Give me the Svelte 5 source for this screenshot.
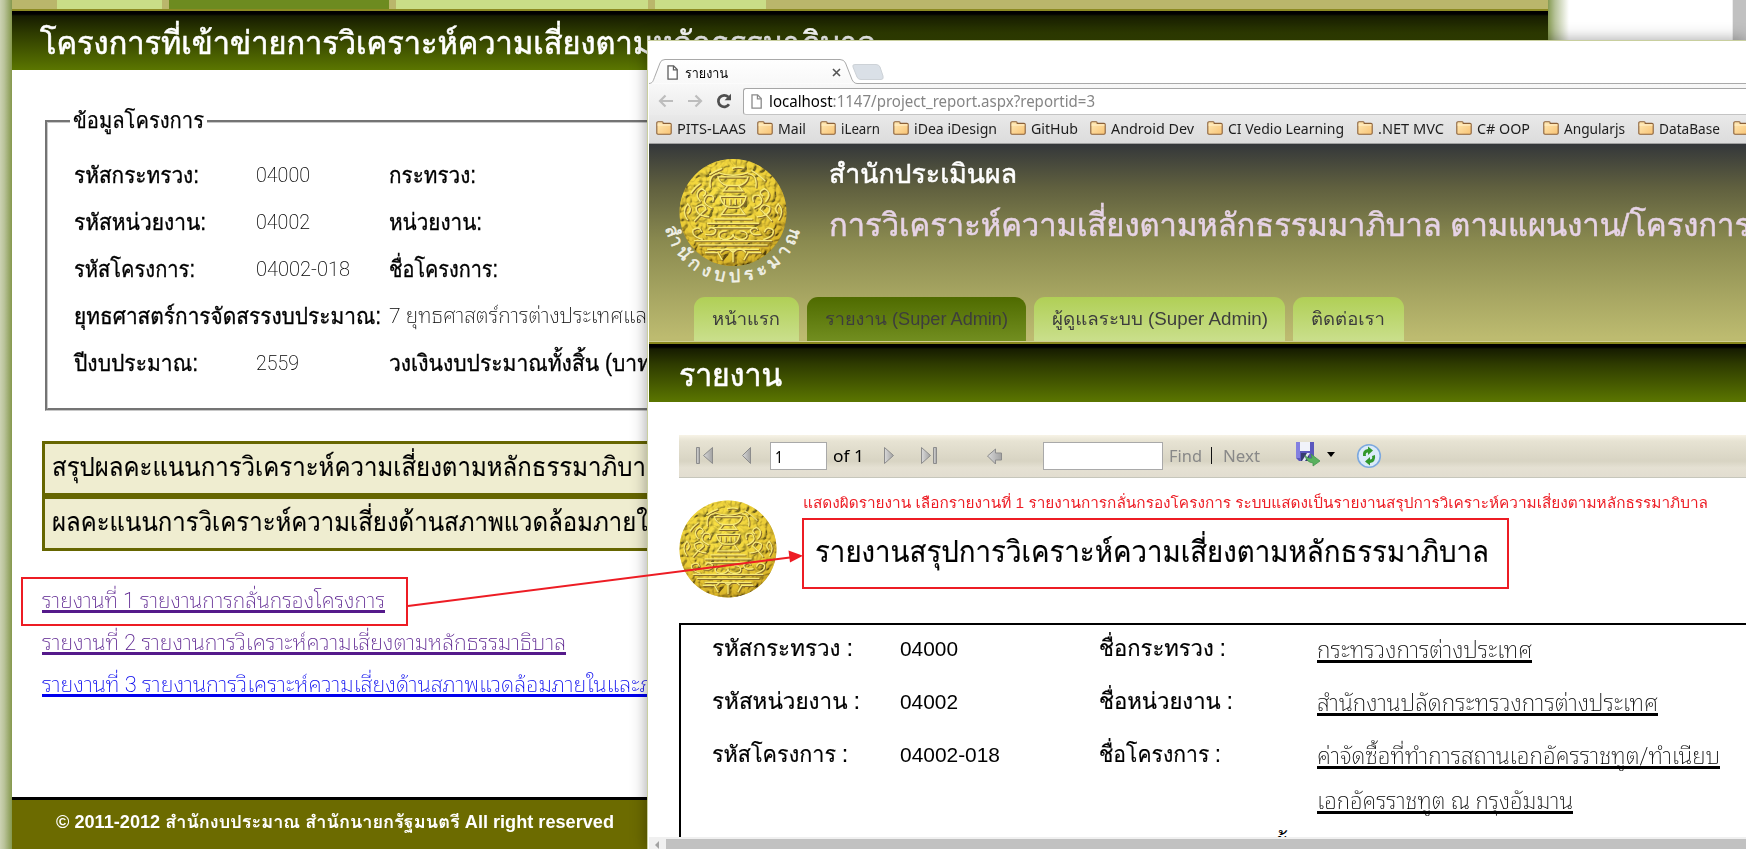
<script>
  function fit(node, width) {
    const natural = node.getBoundingClientRect().width;
    if (width && natural) node.style.transform = `scaleX(${width / natural})`;
  }

  const projectRows = [
    [['รหัสกระทรวง:', 125], ['04000', 54], ['กระทรวง:', 87]],
    [['รหัสหน่วยงาน:', 132], ['04002', 54], ['หน่วยงาน:', 93]],
    [['รหัสโครงการ:', 121], ['04002-018', 94], ['ชื่อโครงการ:', 109]],
    [['ยุทธศาสตร์การจัดสรรงบประมาณ:', 307], ['', 0], ['7 ยุทธศาสตร์การต่างประเทศแล', 258, true]],
    [['ปีงบประมาณ:', 124], ['2559', 43], ['วงเงินงบประมาณทั้งสิ้น (บาท', 262]]
  ];

  const links = [
    { text: 'รายงานที่ 1 รายงานการกลั่นกรองโครงการ', w: 343 },
    { text: 'รายงานที่ 2 รายงานการวิเคราะห์ความเสี่ยงตามหลักธรรมาธิบาล', w: 524 },
    { text: 'รายงานที่ 3 รายงานการวิเคราะห์ความเสี่ยงด้านสภาพแวดล้อมภายในและภ', w: 611, fresh: true }
  ];

  const bookmarks = [
    ['PITS-LAAS', 69, 101], ['Mail', 28, 63], ['iLearn', 39, 73], ['iDea iDesign', 83, 117],
    ['GitHub', 47, 80], ['Android Dev', 83, 117], ['CI Vedio Learning', 116, 150],
    ['.NET MVC', 66, 99], ['C# OOP', 53, 87], ['Angularjs', 61, 95], ['DataBase', 61, 95], ['', 0, 30]
  ];

  const tabs = [
    { text: 'หน้าแรก', w: 68, box: 105 },
    { text: 'รายงาน (Super Admin)', w: 183, box: 219, on: true },
    { text: 'ผู้ดูแลระบบ (Super Admin)', w: 216, box: 251 },
    { text: 'ติดต่อเรา', w: 74, box: 111 }
  ];

  const reportRows = [
    [['รหัสกระทรวง :', 141], ['04000', 58], ['ชื่อกระทรวง :', 127], [['กระทรวงการต่างประเทศ', 215]]],
    [['รหัสหน่วยงาน :', 148], ['04002', 58], ['ชื่อหน่วยงาน :', 134], [['สำนักงานปลัดกระทรวงการต่างประเทศ', 341]]],
    [['รหัสโครงการ :', 136], ['04002-018', 100], ['ชื่อโครงการ :', 122],
      [['ค่าจัดซื้อที่ทำการสถานเอกอัครราชทูต/ทำเนียบ', 403], ['เอกอัครราชทูต ณ กรุงอัมมาน', 256]]]
  ];
</script>

{#snippet t(text, w)}<span class="t" use:fit={w}>{text}</span>{/snippet}

{#snippet page(size)}
  <svg class="file" width={size} height="15" viewBox="0 0 11 15">
    <path d="M1 .8h5.6l3.6 3.8v9.6H1z" fill="#fff" stroke="currentColor" stroke-width="1.3" />
    <path d="M6.4 1v3.9h3.7" fill="none" stroke="currentColor" stroke-width="1.2" />
  </svg>
{/snippet}

{#snippet medal(id)}
  <defs>
    <radialGradient id="g{id}" cx=".42" cy=".32" r=".72">
      <stop offset="0" stop-color="#f2e252" /><stop offset=".6" stop-color="#dfc33a" />
      <stop offset=".9" stop-color="#b58b1b" /><stop offset="1" stop-color="#7c610f" />
    </radialGradient>
    <clipPath id="c{id}"><ellipse cx="50" cy="50" rx="49.5" ry="49.5" /></clipPath>
    <filter id="f{id}" x="0" y="0" width="1" height="1">
      <feTurbulence type="turbulence" baseFrequency=".11" numOctaves="2" seed="8" />
      <feDiffuseLighting surfaceScale="5" diffuseConstant="1.15" lighting-color="#f8d838">
        <feDistantLight azimuth="225" elevation="50" />
      </feDiffuseLighting>
    </filter>
  </defs>
  <g clip-path="url(#c{id})">
    <circle cx="50" cy="50" r="50" fill="url(#g{id})" />
    <rect width="100" height="100" filter="url(#f{id})" opacity=".5" />
    {#each [['#86692c', 1], ['#f7eb79', 0]] as [color, d]}
      <g fill="none" stroke={color} stroke-width="1.3" transform="translate({d} {d})">
        <path d="M36 17h28q-2 7-9 8h-10q-7-1-9-8zM36 13q14 5 28 0M45 25l-4 5h18l-4-5M38 35h24q-2 9-8 10h-8q-6-1-8-10zM44 45l-5 7h22l-5-7M42 37v5m5-5v6m5-6v6m5-6v5" />
        <path d="M32 56h36M26 60h48M28 64h44M18 80h64M14 76h72M26 84h48M38 87q6-7 12 0 6-7 12 0M24 87h12l4 7M76 87h-12l-4 7M50 84v12" />
        <path d="M44 67q-7 0-7 4t7 4q6-1 6-5 0 4 6 5 7 0 7-4t-7-4M22 75q-11-3-9-9 6-4 8 2M78 75q11-3 9-9-6-4-8 2M24 70q10 2 10-4-5-4-7 0M76 70q-10 2-10-4 5-4 7 0" />
        <path d="M28 54q-13-1-12-9 7-5 9 2-6 5-11 11M72 54q13-1 12-9-7-5-9 2 6 5 11 11M31 46q-12-5-5-12 8-1 5 6M69 46q12-5 5-12-8-1-5 6M20 40q-7-8 1-12 7 3 1 7M80 40q7-8-1-12-7 3-1 7M29 27q-2-12 7-13M71 27q2-12-7-13M8 57q-6-8 0-15 5 5 0 9M92 57q6-8 0-15-5 5 0 9M11 32q4-6 9-9m8-8q6-4 12-6m9 0q6-2 11 0m7 2q7 4 13 10" />
      </g>
    {/each}
  </g>
{/snippet}

<div class="screen">
  <div class="back">
    <div class="edge left"></div>
    <main>
      <div class="oldtabs"><i></i><i class="on"></i><i class="wide"></i><i class="last"></i></div>
      <h1>{@render t('โครงการที่เข้าข่ายการวิเคราะห์ความเสี่ยงตามหลักธรรมาภิบาล', 836)}</h1>
      <fieldset>
        <legend>{@render t('ข้อมูลโครงการ', 131)}</legend>
        {#each projectRows as [label, value, other]}
          <div class="prow">
            <b>{@render t(label[0], label[1])}</b>
            <span class="thin">{@render t(value[0], value[1])}</span>
            <span class={other[2] ? 'thin' : 'mid'}>{@render t(other[0], other[1])}</span>
          </div>
        {/each}
      </fieldset>
      <div class="panels">
        <div>{@render t('สรุปผลคะแนนการวิเคราะห์ความเสี่ยงตามหลักธรรมาภิบา', 594)}</div>
        <div>{@render t('ผลคะแนนการวิเคราะห์ความเสี่ยงด้านสภาพแวดล้อมภายใ', 596)}</div>
      </div>
      <div class="links">
        {#each links as l}<div class:fresh={l.fresh}>{@render t(l.text, l.w)}</div>{/each}
      </div>
      <footer>{@render t('© 2011-2012 สำนักงบประมาณ สำนักนายกรัฐมนตรี All right reserved', 558)}</footer>
    </main>
    <div class="edge right"></div>
    <div class="vbar"></div>
  </div>

  <section class="window">
    <div class="strip">
      <svg class="outline" width="1097" height="43" viewBox="0 0 1097 43">
        <defs><linearGradient id="tabfill" x2="0" y2="1"><stop stop-color="#fff" /><stop offset="1" stop-color="#f8f8f8" /></linearGradient></defs>
        <path d="M0 42.5 C4 42 4 40 6 35 L11 22 Q12 18.500 16 18.500 H191 Q195 18.500 196.500 22 L202 36 Q204 42.500 208 42.500 H1097" fill="url(#tabfill)" stroke="#a9a9a9" />
        <path d="M206 23.500 H227 Q230 23.500 231 26 L234 35 Q235 38.500 232 38.500 H212 Q209 38.500 208 36 L204 26 Q203 23.500 206 23.500Z" fill="#dae0e7" stroke="#cdd2d7" />
      </svg>
      <div class="tabtext">
        {@render page(11)}
        <span class="name">{@render t('รายงาน', 43)}</span>
        <svg width="9" height="9" viewBox="0 0 9 9"><path d="M1 1l7 7M8 1L1 8" stroke="#555" stroke-width="1.6" /></svg>
      </div>
    </div>
    <div class="nav">
      <svg width="16" height="14" viewBox="0 0 16 14"><path d="M15 7H2M7.500 1.500L2 7l5.500 5.500" fill="none" stroke="#bdbdbd" stroke-width="2.200" /></svg>
      <svg width="16" height="14" viewBox="0 0 16 14"><path d="M1 7h13M8.500 1.500L14 7l-5.500 5.500" fill="none" stroke="#bdbdbd" stroke-width="2.200" /></svg>
      <svg width="16" height="16" viewBox="0 0 16 16"><path d="M13 11.300A5.800 5.800 0 1 1 12.300 4" fill="none" stroke="#4f4f4f" stroke-width="2.700" /><path d="M15 .8v6.400H8.600z" fill="#4f4f4f" /></svg>
      <div class="url">
        {@render page(11)}
        <span class="addr" use:fit={326}><em>localhost</em>:1147/project_report.aspx?reportid=3</span>
      </div>
    </div>
    <div class="marks">
      {#each bookmarks as [name, w, step]}
        <div style="width:{step}px">
          <svg width="16" height="14" viewBox="0 0 16 14">
            <defs><linearGradient id="fold" x2="1" y2="1"><stop stop-color="#ffe9b5" /><stop offset="1" stop-color="#f8c374" /></linearGradient></defs>
            <path d="M.8 12V2Q.8.800 2 .8h4.200q1 0 1 1.600H14q1.200 0 1.200 1.200V12q0 1.200-1.200 1.200H2Q.8 13.200.8 12z" fill="url(#fold)" stroke="#8b6038" stroke-width="1.100" />
            <path d="M1.500 4h13" stroke="#fff1cd" />
          </svg>
          {@render t(name, w)}
        </div>
      {/each}
    </div>

    <header>
      <svg class="logo" width="150" height="145" viewBox="655 150 150 145">
        <svg x="679" y="158.500" width="108" height="108" viewBox="0 0 100 100">{@render medal('a')}</svg>
        <path id="arc" d="M665.600 228 A69 69 0 0 0 800.400 228" fill="none" />
        <text font-size="18" fill="#f1f1e8" stroke="#f1f1e8" stroke-width=".5"><textPath href="#arc" textLength="184">สำนักงบประมาณ</textPath></text>
      </svg>
      <div class="titles">
        <h2>{@render t('สำนักประเมินผล', 188)}</h2>
        <h3>{@render t('การวิเคราะห์ความเสี่ยงตามหลักธรรมมาภิบาล ตามแผนงาน/โครงการ', 922)}</h3>
      </div>
      <nav>
        {#each tabs as tab}
          <div class:on={tab.on} style="width:{tab.box}px">{@render t(tab.text, tab.w)}</div>
        {/each}
      </nav>
    </header>
    <div class="band">{@render t('รายงาน', 103)}</div>

    <div class="tools">
      <svg width="370" height="42" viewBox="679 435 370 42">
        <defs><linearGradient id="gr" x2="1"><stop stop-color="#d9d9d9" /><stop offset="1" stop-color="#a2a2a2" /></linearGradient></defs>
        <g fill="url(#gr)" stroke="#8c8c8c">
          <path d="M696.500 447.500h3v16h-3z" />
          <path d="M712.500 447.500v16L703.500 455.500z" />
          <path d="M750.500 447.500v16L742.500 455.500z" />
          <path d="M884.500 447.500v16L893.500 455.500z" />
          <path d="M921.500 447.500v16L930.500 455.500z" />
          <path d="M933.500 447.500h3v16h-3z" />
          <path d="M987.500 456l8-7v4h6v7h-6v4z" />
        </g>
      </svg>
      <span class="box one">{@render t('1', 8)}</span>
      <span class="of">{@render t('of 1', 31)}</span>
      <span class="box find"></span>
      <span class="gray">{@render t('Find', 33)}</span>
      <i class="bar"></i>
      <span class="gray next">{@render t('Next', 37)}</span>
      <svg class="disk" width="90" height="30" viewBox="1294 440 90 30">
        <path d="M1296 442h18v19h-15l-3-3z" fill="#5b57bd" /><path d="M1296 442h4v16h-4z" fill="#8380e0" />
        <path d="M1300 442h10v9h-10z" fill="#f1f3fa" /><path d="M1301 453h8v8h-8z" fill="#373b70" /><path d="M1302 461l5-8h3l-5 8z" fill="#e3e6f2" />
        <path d="M1305 455q2 4 7 3l-1-4 9 7-7 5v-3q-7-1-8-8z" fill="#59b15e" stroke="#3c8f49" stroke-width=".7" />
        <path d="M1327 452h8l-4 5z" fill="#000" />
        <circle cx="1369" cy="456" r="11.300" fill="#dcebfa" stroke="#7da9df" stroke-width="1.600" />
        <g fill="#31982c"><path d="M1363 456q-1-6 5-7v-2.500l5 4-5 4.500v-2.500q-3 0-2 3.500z" /><path d="M1375 455q1 7-5 8v2.500l-5-4 5-4.500v2.500q3 0 2-3.500z" /></g>
      </svg>
    </div>

    <div class="rephead">
      <svg width="98" height="98" viewBox="0 0 100 100">{@render medal('b')}</svg>
      <div class="heads">
        <p class="note">{@render t('แสดงผิดรายงาน เลือกรายงานที่ 1 รายงานการกลั่นกรองโครงการ ระบบแสดงเป็นรายงานสรุปการวิเคราะห์ความเสี่ยงตามหลักธรรมาภิบาล', 905)}</p>
        <p class="title">{@render t('รายงานสรุปการวิเคราะห์ความเสี่ยงตามหลักธรรมาภิบาล', 674)}</p>
      </div>
    </div>

    <div class="report">
      {#each reportRows as [code, value, label, lines]}
        <div class="rrow">
          <span class="lab">{@render t(code[0], code[1])}</span>
          <span class="num">{@render t(value[0], value[1])}</span>
          <span class="lab">{@render t(label[0], label[1])}</span>
          <div class="under">{#each lines as l}<div>{@render t(l[0], l[1])}</div>{/each}</div>
        </div>
      {/each}
      <div class="cut"><span>ทั้</span></div>
    </div>
    <div class="hbar">
      <svg width="17" height="12" viewBox="0 0 17 12"><path d="M10 4v8L6 8z" fill="#a3a3a3" /></svg>
      <i></i>
    </div>
  </section>

  <svg class="marksup" width="1746" height="849" viewBox="0 0 1746 849">
    <g fill="none" stroke="#ed1c24" stroke-width="2">
      <rect x="22" y="578" width="385" height="47" />
      <rect x="803" y="519" width="705" height="69" />
      <path d="M408 606L790 557.500" />
    </g>
    <path d="M803 555.700L788.500 550.500l1.500 12z" fill="#ed1c24" />
  </svg>
</div>

<style>
  :global(body) { margin: 0; background: #fff; overflow: hidden; }
  .screen { position: relative; width: 1746px; height: 849px; overflow: hidden; font-family: "Liberation Sans", Loma, "Noto Sans Thai Looped", "Noto Sans Thai", sans-serif; color: #000; }
  .screen * { box-sizing: border-box; }
  .t, .addr { display: inline-block; white-space: pre; transform-origin: 0 50%; }
  svg { display: block; flex: none; }
  h1, h2, h3, p { margin: 0; font-weight: normal; }

  .back { display: grid; grid-template-columns: 12px 1536px 1fr 14px; height: 849px; }
  .edge.left { background: linear-gradient(90deg, #ccd2b3, #bac39a 35%, #85984d); }
  .edge.right { background: linear-gradient(90deg, #869b52, #b6c298 7px, #fff 21px); }
  .vbar { background: #c1c1c1; border-left: 1px solid #ececec; }
  main { display: flex; flex-direction: column; min-width: 0; }
  .oldtabs { height: 11px; padding-left: 45px; display: flex; gap: 7px; background: #bab66b; border-bottom: 2px solid #8d8b23; }
  .oldtabs i { width: 105px; background: #c9dd87; }
  .oldtabs i.on { width: 220px; background: #6d8b20; }
  .oldtabs i.wide { width: 252px; }
  .oldtabs i.last { width: 111px; }
  h1 { height: 59px; padding: 6px 0 0 28px; line-height: 53px; font-size: 32px; font-weight: 400; -webkit-text-stroke: .6px #fff; color: #fff; background: linear-gradient(#000 3px, #161c00 5px, #2e3b00 22px, #5b7600); }
  fieldset { margin: 31px 40px 0 33px; padding: 11px 0 21px 26px; border: 3px groove #c8c8c8; min-width: 0; height: 310px; }
  legend { height: 40px; line-height: 40px; font-size: 22px; padding: 0 0 0 3px; margin-left: -4px; width: 137px; font-weight: 400; -webkit-text-stroke: .25px #000; }
  .prow { display: grid; grid-template-columns: 182px 133px 1fr; height: 47px; line-height: 46px; font-size: 23px; }
  .prow b, .mid { font-weight: 400; -webkit-text-stroke: .35px #000; }
  .thin { font-family: Roboto, "Noto Sans Thai Looped", Loma, "Noto Sans Thai", sans-serif; font-weight: 200; font-size: 21px; }
  .panels { margin: 30px 40px 0 30px; }
  .panels div { height: 55px; border: 3px solid #666600; background: #efedd0; padding-left: 7px; line-height: 47px; font-size: 27px; -webkit-text-stroke: .15px #000; }
  .links { margin: 29px 0 0 30px; font-family: Roboto, "Noto Sans Thai Looped", Loma, "Noto Sans Thai", sans-serif; font-size: 22px; font-weight: 200; color: #551a8b; }
  .links div { height: 42px; line-height: 42px; }
  .links .fresh { color: #0000ee; }
  .links .t, .under .t { text-decoration: underline; text-decoration-thickness: 3px; text-underline-offset: 2px; text-decoration-skip-ink: none; }
  footer { margin-top: auto; height: 52px; border-top: 3px solid #000; background: #6c6b00; color: #fff; font-weight: bold; font-size: 18px; line-height: 45px; padding-left: 44px; }

  .window { position: absolute; left: 647px; top: 40px; width: 1099px; height: 809px; padding-left: 1px; background: #fff; border: solid #c9cf9f; border-width: 1px 0 0 1px; box-shadow: 0 0 15px rgba(0, 0, 0, .38); display: flex; flex-direction: column; clip-path: inset(-30px 0 0 -30px); }
  .strip { display: grid; height: 43px; flex: none; }
  .strip > * { grid-area: 1 / 1; }
  .tabtext { display: flex; align-items: flex-start; padding: 24px 0 0 18px; color: #5d5d5d; }
  .name { width: 147px; margin-left: 7px; color: #000; font-size: 14px; line-height: 16px; }
  .tabtext svg:last-child { margin-top: 3px; }
  .nav { height: 31px; flex: none; display: flex; align-items: center; gap: 13px; padding: 3px 0 0 9px; background: linear-gradient(#f8f8f8, #ebebeb); }
  .nav > svg { margin-top: -1px; }
  .url { flex: 1; height: 27px; margin-left: -2px; display: flex; align-items: center; gap: 7px; background: #fff; border: 1px solid #a6a6a6; border-bottom-color: #c4c4c4; border-right: 0; border-radius: 3px 0 0 3px; padding-left: 7px; color: #8a8a8a; }
  .addr { font: 16px/24px "Noto Sans", sans-serif; color: #858585; }
  .addr em { font-style: normal; color: #000; }
  .marks { height: 29px; flex: none; display: flex; padding: 0 0 2px 7px; background: linear-gradient(#e9e9e9, #dcdcdc); border-bottom: 1px solid #a0a0a0; overflow: hidden; }
  .marks div { flex: none; display: flex; gap: 5px; align-items: center; font: 15px/24px "Noto Sans", sans-serif; color: #1d1d1d; }

  header { height: 200px; flex: none; background: linear-gradient(#34373a, #60603f 22%, #8b8b50 50%, #bdbb70 98%); border-bottom: 2px solid #88871d; display: grid; grid-template-columns: 180px 1fr; grid-template-rows: 153px 45px; }
  .logo { margin: 6px 0 0 6px; }
  .titles { padding-top: 8px; }
  h2 { font-size: 27px; line-height: 44px; color: #fff; -webkit-text-stroke: .5px #fff; }
  h3 { padding-top: 1px; font-size: 32px; line-height: 56px; color: #e6d3e5; -webkit-text-stroke: .5px #e6d3e5; }
  nav { grid-column: 1 / 3; display: flex; gap: 8px; padding-left: 45px; border-bottom: 1px solid #d0ce93; }
  nav div { flex: none; height: 44px; padding-left: 18px; border-radius: 11px 11px 0 0; line-height: 44px; font-size: 18px; color: #3d3d3d; background: linear-gradient(#b0cf56, #cadf8c); }
  nav div.on { background: linear-gradient(#4f6b00, #728e20); }
  .band { height: 58px; flex: none; padding: 4px 0 0 30px; line-height: 55px; font-size: 32px; -webkit-text-stroke: .6px #fff; color: #fff; background: linear-gradient(#000 3px, #161c00 5px, #2e3b00 20px, #5b7600); }

  .tools { height: 43px; flex: none; margin: 33px 0 0 30px; display: flex; border-bottom: 1px solid #c6c6bb; background: linear-gradient(#f7f3e6, #e7e3d3 6px, #d8d4c3 62%, #e5e1d3 78%, #e2ddd0); font: 16px/42px "Noto Sans", sans-serif; }
  .tools > svg:first-child { margin-right: -279px; }
  .box { margin-top: 7px; height: 28px; background: #fff; border: 1px solid #a9a9a9; line-height: 28px; }
  .one { width: 57px; padding-left: 4px; }
  .of { width: 216px; padding-left: 6px; }
  .find { width: 120px; margin-right: 6px; }
  .gray { width: 42px; color: #888; }
  .bar { width: 1px; height: 17px; margin: 12px 11px 0 0; background: #111; }
  .next { width: 71px; }
  .disk { margin-top: 5px; }

  .rephead { height: 145px; flex: none; display: flex; gap: 26px; padding: 22px 0 0 30px; }
  .note { margin-top: -11px; font-size: 14.500px; line-height: 28px; color: #ed1c24; }
  .title { padding-left: 12px; margin-top: 8px; font-size: 30px; line-height: 54px; -webkit-text-stroke: .2px #000; }
  .report { flex: 1; min-height: 0; margin-left: 30px; border: solid #000; border-width: 2px 0 0 2px; overflow: hidden; position: relative; }
  .rrow { display: grid; grid-template-columns: 188px 199px 218px 1fr; height: 53px; padding-left: 31px; line-height: 47px; font-size: 23px; }
  .lab { -webkit-text-stroke: .2px #000; }
  .num { font-size: 21px; }
  .under { padding-top: 2px; font-family: Roboto, "Noto Sans Thai Looped", Loma, "Noto Sans Thai", sans-serif; font-weight: 200; }
  .under div { height: 45px; }
  .cut { position: absolute; left: 590px; top: 206px; font-size: 23px; line-height: 30px; }
  .hbar { height: 12px; flex: none; background: #f0f0f0; display: flex; }
  .hbar i { flex: 1; margin-top: 2px; background: #c1c1c1; }
  .marksup { position: absolute; inset: 0; }
</style>
